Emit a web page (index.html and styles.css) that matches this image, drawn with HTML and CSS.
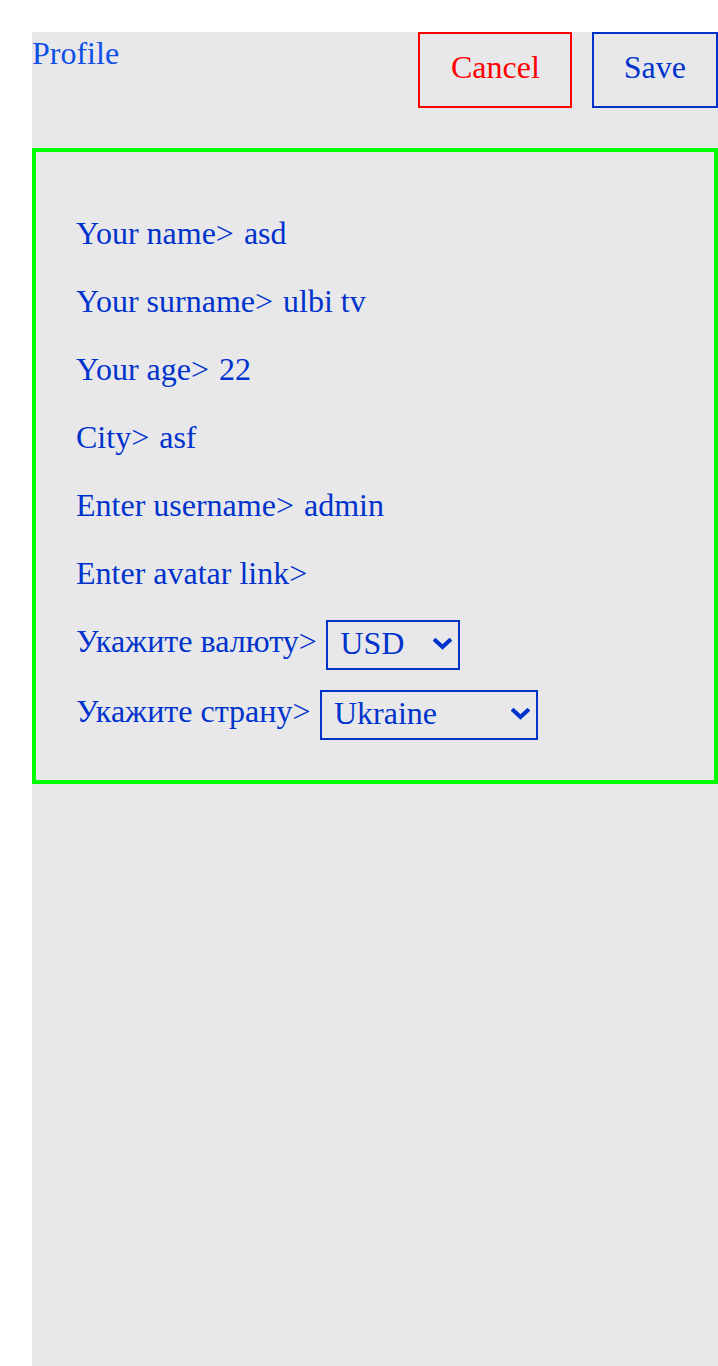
FILE: index.html
```html
<!DOCTYPE html>
<html lang="en">
<head>
<meta charset="utf-8">
<title>Profile</title>
<link rel="stylesheet" href="styles.css">
</head>
<body>
<div class="page">
  <header class="header">
    <span class="title">Profile</span>
    <div class="actions">
      <button class="btn btn-cancel">Cancel</button>
      <button class="btn btn-save">Save</button>
    </div>
  </header>
  <div class="card">
    <div class="avatar"></div>
    <div class="row"><span class="label">Your name&gt;</span><span class="value">asd</span></div>
    <div class="row"><span class="label">Your surname&gt;</span><span class="value">ulbi tv</span></div>
    <div class="row"><span class="label">Your age&gt;</span><span class="value">22</span></div>
    <div class="row"><span class="label">City&gt;</span><span class="value">asf</span></div>
    <div class="row"><span class="label">Enter username&gt;</span><span class="value">admin</span></div>
    <div class="row"><span class="label">Enter avatar link&gt;</span><span class="value"></span></div>
    <div class="row row-select">
      <span class="label">Укажите валюту&gt;</span>
      <span class="select-wrap">
        <select class="select">
          <option>RUB</option>
          <option>EUR</option>
          <option selected>USD</option>
        </select>
        <svg class="chevron" width="19" height="12" viewBox="0 0 19 12"><polyline points="2.5,2.5 9.5,9 16.5,2.5" fill="none" stroke="#0033cc" stroke-width="4" stroke-linecap="square"/></svg>
      </span>
    </div>
    <div class="row row-select">
      <span class="label">Укажите страну&gt;</span>
      <span class="select-wrap">
        <select class="select">
          <option>Armenia</option>
          <option>Russia</option>
          <option>Belarus</option>
          <option selected>Ukraine</option>
          <option>Kazakhstan</option>
        </select>
        <svg class="chevron" width="19" height="12" viewBox="0 0 19 12"><polyline points="2.5,2.5 9.5,9 16.5,2.5" fill="none" stroke="#0033cc" stroke-width="4" stroke-linecap="square"/></svg>
      </span>
    </div>
  </div>
</div>
</body>
</html>
```

FILE: styles.css
```css
html, body {
  margin: 0;
  padding: 0;
  background: #ffffff;
}

body {
  font-family: "Liberation Serif", "Times New Roman", serif;
  font-size: 32px;
  padding: 32px 0 0 32px;
}

.page {
  background: #e8e8eb;
  min-height: 1334px;
  color: #0033cc;
}

.header {
  display: flex;
  justify-content: space-between;
  align-items: flex-start;
}

.title {
  color: #0e4fe6;
  font-size: 32px;
  line-height: 42px;
}

.actions {
  display: flex;
  gap: 20px;
}

.btn {
  font-family: "Liberation Serif", "Times New Roman", serif;
  font-size: 32px;
  line-height: 37px;
  background: transparent;
  padding: 15px 30px 20px 30px;
  margin: 0;
  cursor: pointer;
}

.btn-cancel {
  color: #ff0000;
  border: 2px solid #ff0000;
  padding-left: 31px;
}

.btn-save {
  color: #0033cc;
  border: 2px solid #0033cc;
}

.card {
  margin-top: 40px;
  border: 4px solid #00ff00;
  padding: 40px;
  display: flex;
  flex-direction: column;
  gap: 20px;
}

.avatar {
  height: 0;
}

.row {
  display: flex;
  align-items: center;
  gap: 10px;
  height: 48px;
  box-sizing: border-box;
  padding-bottom: 5px;
}

.row-select {
  height: 50px;
  padding-bottom: 0;
  gap: 9.5px;
}

.row-select .label {
  padding-bottom: 8px;
}

.select-wrap {
  position: relative;
  display: inline-flex;
}

.select {
  -webkit-appearance: none;
  appearance: none;
  font-family: "Liberation Serif", "Times New Roman", serif;
  font-size: 32px;
  color: #0033cc;
  background: transparent;
  border: 2px solid #0033cc;
  border-radius: 0;
  height: 50px;
  padding: 0 52px 4px 12px;
  margin: 0;
}

.chevron {
  position: absolute;
  right: 8px;
  top: 18px;
  pointer-events: none;
}
```
